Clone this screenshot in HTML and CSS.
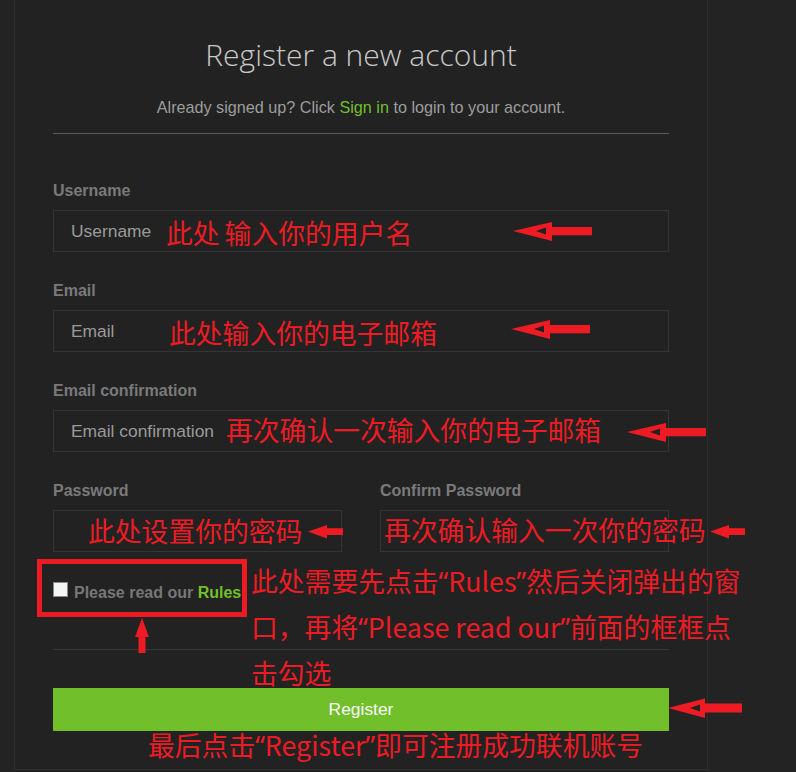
FILE: index.html
```html
<!DOCTYPE html>
<html lang="zh-CN">
<head>
<meta charset="utf-8">
<title>Register a new account</title>
<link rel="stylesheet" href="styles.css">
</head>
<body>
<div class="panel">
  <h1 class="title">Register a new account</h1>
  <p class="subtitle">Already signed up? Click <a class="link" href="#">Sign in</a> to login to your account.</p>
  <hr class="divider">
  <form class="form">
    <div class="group">
      <label class="label">Username</label>
      <input class="input" type="text" placeholder="Username">
    </div>
    <div class="group">
      <label class="label">Email</label>
      <input class="input" type="text" placeholder="Email">
    </div>
    <div class="group">
      <label class="label">Email confirmation</label>
      <input class="input" type="text" placeholder="Email confirmation">
    </div>
    <div class="row">
      <div>
        <label class="label">Password</label>
        <input class="input" type="password">
      </div>
      <div>
        <label class="label">Confirm Password</label>
        <input class="input" type="password">
      </div>
    </div>
    <div class="check-row">
      <input class="check-box" type="checkbox">
      <span class="check-text">Please read our <a class="rules" href="#">Rules</a></span>
    </div>
    <hr class="divider2">
    <button class="button" type="button">Register</button>
  </form>
</div>

<div class="note n1">此处 输入你的用户名</div>
<div class="note n2">此处输入你的电子邮箱</div>
<div class="note n3">再次确认一次输入你的电子邮箱</div>
<div class="note n4">此处设置你的密码</div>
<div class="note n5">再次确认输入一次你的密码</div>
<div class="note n6">此处需要先点击<span class="q">“</span>Rules<span class="q">”</span>然后关闭弹出的窗<br>口，再将<span class="q">“</span>Please read our<span class="q">”</span>前面的框框点<br>击勾选</div>
<div class="note n7">最后点击<span class="q">“</span>Register<span class="q">”</span>即可注册成功联机账号</div>

<div class="callout"></div>

<svg class="arrow a1" width="80" height="21" viewBox="0 0 80 21"><polygon points="0,10 39,1 39,20" fill="#ed1c24"/><polygon points="23,10 33,6.6 33,13.4" fill="#222"/><rect x="33" y="6" width="46" height="8.3" fill="#ed1c24"/></svg>
<svg class="arrow a2" width="80" height="21" viewBox="0 0 80 21"><polygon points="0,10 39,1 39,20" fill="#ed1c24"/><polygon points="23,10 33,6.6 33,13.4" fill="#222"/><rect x="33" y="6" width="46" height="8.3" fill="#ed1c24"/></svg>
<svg class="arrow a3" width="80" height="21" viewBox="0 0 80 21"><polygon points="0,10 39,1 39,20" fill="#ed1c24"/><polygon points="23,10 33,6.6 33,13.4" fill="#222"/><rect x="33" y="6" width="46" height="8.3" fill="#ed1c24"/></svg>
<svg class="arrow a6" width="76" height="21" viewBox="0 0 76 21"><polygon points="0,10 37,0.5 37,20" fill="#ed1c24"/><polygon points="22,10 32,6.6 32,13.4" fill="#222"/><rect x="32" y="5.5" width="42" height="9" fill="#ed1c24"/></svg>
<svg class="arrow a4" width="36" height="14" viewBox="0 0 36 14"><polygon points="0,6.5 19,0 19,13.5" fill="#ed1c24"/><rect x="18" y="3.2" width="17" height="6.8" fill="#ed1c24"/></svg>
<svg class="arrow a5" width="36" height="14" viewBox="0 0 36 14"><polygon points="0,6.5 19,0 19,13.5" fill="#ed1c24"/><rect x="18" y="3.2" width="17" height="6.8" fill="#ed1c24"/></svg>
<svg class="arrow up" width="14" height="36" viewBox="0 0 14 36"><polygon points="7,0 0,19 14,19" fill="#ed1c24"/><rect x="3.5" y="18" width="7" height="17" fill="#ed1c24"/></svg>
</body>
</html>
```
FILE: styles.css
```css
html, body {
  margin: 0;
  padding: 0;
}

body {
  position: relative;
  background: #232323;
  font-family: "Liberation Sans", Arial, sans-serif;
  min-height: 772px;
  overflow: hidden;
}

.panel {
  margin-left: 14px;
  width: 694px;
  box-sizing: border-box;
  background: #222;
  border: 1px solid #2f2f2f;
  border-top: 0;
  padding: 37px 38px 38px;
}

.title {
  margin: 0;
  font-family: "Open Sans", "Liberation Sans", sans-serif;
  font-weight: 300;
  font-size: 30px;
  line-height: 36px;
  text-align: center;
  color: #c9c9c9;
}

.subtitle {
  margin: 24px 0 0;
  font-size: 16.2px;
  line-height: 20px;
  text-align: center;
  color: #9d9d9d;
}

.link,
.rules {
  color: #72bf2b;
  text-decoration: none;
}

.divider {
  margin: 16px 0 0;
  border: 0;
  border-top: 1px solid #5a5a5a;
  height: 0;
}

.form {
  margin: 47px 0 0;
}

.group {
  margin-bottom: 29px;
}

.label {
  display: block;
  font-weight: bold;
  font-size: 16px;
  line-height: 20px;
  color: #7a7a7a;
  margin-bottom: 9px;
}

.input {
  display: block;
  width: 100%;
  height: 42px;
  box-sizing: border-box;
  margin: 0;
  border: 1px solid #353535;
  border-radius: 0;
  background: #222;
  padding: 0 17px;
  font-family: "Liberation Sans", Arial, sans-serif;
  font-size: 17.4px;
  color: #ccc;
  outline: none;
}

.input::placeholder {
  color: #9a9a9a;
  opacity: 1;
}

.row {
  display: grid;
  grid-template-columns: 1fr 1fr;
  column-gap: 38px;
}

.check-row {
  display: flex;
  align-items: flex-start;
  margin-top: 31px;
  height: 20px;
}

.check-box {
  appearance: none;
  -webkit-appearance: none;
  width: 15px;
  height: 15px;
  box-sizing: border-box;
  margin: -1px 6px 0 0;
  border: 1px solid #8a8a8a;
  background: #f2f6f6;
  border-radius: 0;
}

.check-text {
  font-weight: bold;
  font-size: 16px;
  line-height: 20px;
  color: #777;
  white-space: nowrap;
}

.divider2 {
  margin: 46px 0 0;
  border: 0;
  border-top: 1px solid #383838;
  height: 0;
}

.button {
  display: block;
  width: 100%;
  height: 43px;
  margin: 38px 0 0;
  border: 0;
  border-radius: 0;
  background: #71bf2b;
  color: #f8f8f8;
  font-family: "Liberation Sans", Arial, sans-serif;
  font-size: 17.4px;
}

.note {
  position: absolute;
  color: #ed1c24;
  font-family: "Noto Sans CJK SC", "Noto Sans", sans-serif;
  font-size: 26.8px;
  line-height: 40px;
  white-space: nowrap;
}

.q {
  font-family: "Noto Sans", "Liberation Sans", sans-serif;
}

.n1 { left: 166px; top: 213px; word-spacing: -1px; }
.n2 { left: 169px; top: 313px; }
.n3 { left: 226px; top: 410px; }
.n4 { left: 88px; top: 511px; }
.n5 { left: 384px; top: 510px; }
.n6 { left: 251px; top: 558px; line-height: 45px; }
.n7 { left: 148px; top: 725px; }

.callout {
  position: absolute;
  left: 37px;
  top: 559px;
  width: 210px;
  height: 58px;
  box-sizing: border-box;
  border: 5px solid #ed1c24;
}

.arrow {
  position: absolute;
  display: block;
}

.a1 { left: 513px; top: 221px; }
.a2 { left: 511px; top: 319px; }
.a3 { left: 627px; top: 422px; }
.a6 { left: 668px; top: 698px; }
.a4 { left: 308px; top: 525px; }
.a5 { left: 710px; top: 525px; }
.up { left: 135px; top: 618px; }
```
